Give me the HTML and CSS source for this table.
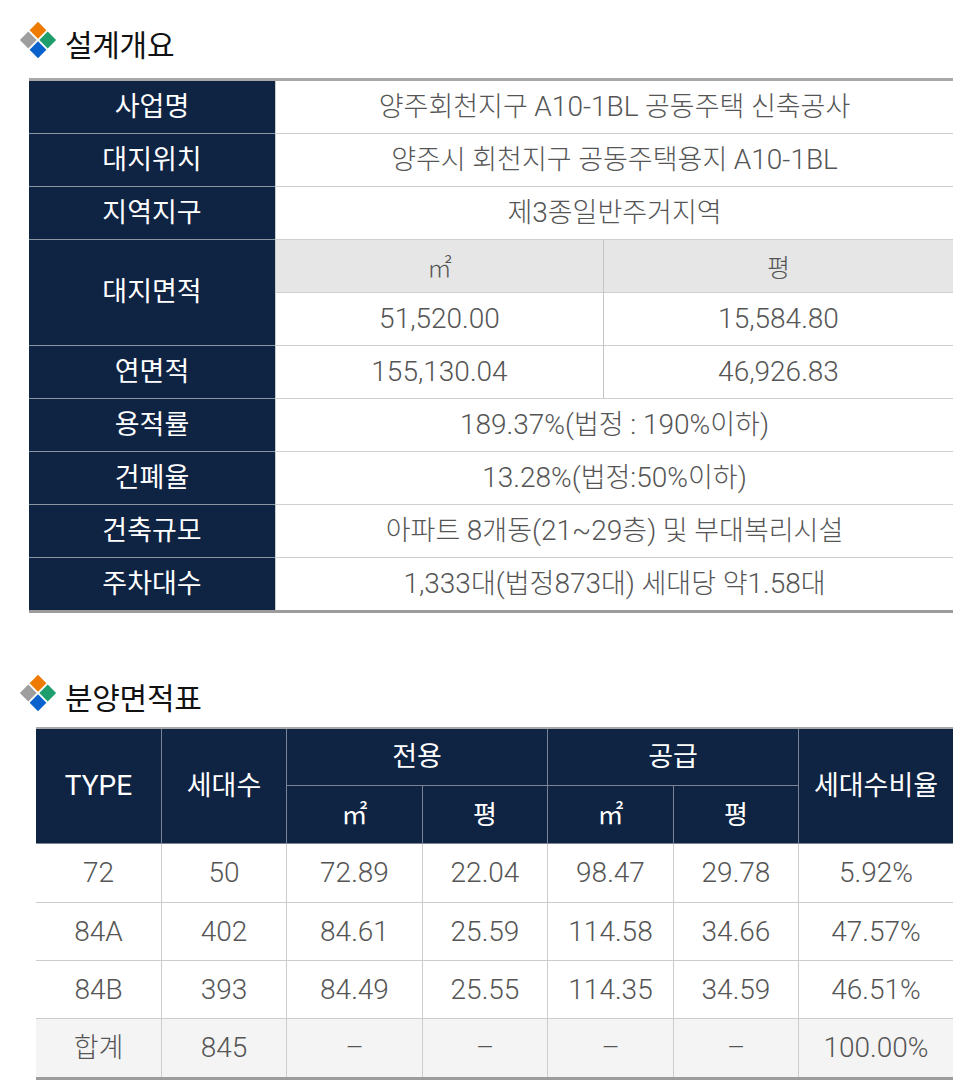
FILE: index.html
```html
<!DOCTYPE html>
<html lang="ko">
<head>
<meta charset="utf-8">
<title>설계개요 · 분양면적표</title>
<link rel="stylesheet" href="styles.css">
</head>
<body>
<div class="page">
  <h2 class="title">
    <svg class="ico" viewBox="0 0 40 40" aria-hidden="true">
      <g transform="rotate(45 20 20)">
        <rect x="6.5" y="6.5" width="12.5" height="12.5" fill="#ef7a00"/>
        <rect x="21" y="6.5" width="12.5" height="12.5" fill="#1d9e6c"/>
        <rect x="21" y="21" width="12.5" height="12.5" fill="#0a62cc"/>
        <rect x="6.5" y="21" width="12.5" height="12.5" fill="#9e9e9e"/>
      </g>
    </svg>
    <span class="title-text">설계개요</span>
  </h2>

  <table class="spec">
    <colgroup>
      <col class="c-h"><col class="c-a"><col class="c-b">
    </colgroup>
    <tbody>
      <tr><th>사업명</th><td colspan="2">양주회천지구 <span class="n">A10-1BL</span> 공동주택 신축공사</td></tr>
      <tr><th>대지위치</th><td colspan="2">양주시 회천지구 공동주택용지 <span class="n">A10-1BL</span></td></tr>
      <tr><th>지역지구</th><td colspan="2">제<span class="n">3</span>종일반주거지역</td></tr>
      <tr><th rowspan="2" class="tall">대지면적</th><td class="sub">㎡</td><td class="sub sep">평</td></tr>
      <tr><td class="n">51,520.00</td><td class="n sep">15,584.80</td></tr>
      <tr><th>연면적</th><td class="n">155,130.04</td><td class="n sep">46,926.83</td></tr>
      <tr><th>용적률</th><td colspan="2"><span class="n">189.37%(</span>법정 <span class="n">: 190%</span>이하<span class="n">)</span></td></tr>
      <tr><th>건폐율</th><td colspan="2"><span class="n">13.28%(</span>법정<span class="n">:50%</span>이하<span class="n">)</span></td></tr>
      <tr><th>건축규모</th><td colspan="2">아파트 <span class="n">8</span>개동<span class="n">(21~29</span>층<span class="n">)</span> 및 부대복리시설</td></tr>
      <tr class="last"><th>주차대수</th><td colspan="2"><span class="n">1,333</span>대<span class="n">(</span>법정<span class="n">873</span>대<span class="n">)</span> 세대당 약<span class="n">1.58</span>대</td></tr>
    </tbody>
  </table>

  <h2 class="title title2">
    <svg class="ico" viewBox="0 0 40 40" aria-hidden="true">
      <g transform="rotate(45 20 20)">
        <rect x="6.5" y="6.5" width="12.5" height="12.5" fill="#ef7a00"/>
        <rect x="21" y="6.5" width="12.5" height="12.5" fill="#1d9e6c"/>
        <rect x="21" y="21" width="12.5" height="12.5" fill="#0a62cc"/>
        <rect x="6.5" y="21" width="12.5" height="12.5" fill="#9e9e9e"/>
      </g>
    </svg>
    <span class="title-text">분양면적표</span>
  </h2>

  <table class="area">
    <colgroup>
      <col class="w126"><col class="w125"><col class="w136"><col class="w125"><col class="w126"><col class="w125"><col class="w154">
    </colgroup>
    <thead>
      <tr class="h1">
        <th rowspan="2" class="en">TYPE</th>
        <th rowspan="2">세대수</th>
        <th colspan="2">전용</th>
        <th colspan="2">공급</th>
        <th rowspan="2" class="end">세대수비율</th>
      </tr>
      <tr class="h2">
        <th>㎡</th><th>평</th><th>㎡</th><th>평</th>
      </tr>
    </thead>
    <tbody>
      <tr class="r1"><td>72</td><td>50</td><td>72.89</td><td>22.04</td><td>98.47</td><td>29.78</td><td class="end">5.92%</td></tr>
      <tr><td>84A</td><td>402</td><td>84.61</td><td>25.59</td><td>114.58</td><td>34.66</td><td class="end">47.57%</td></tr>
      <tr><td>84B</td><td>393</td><td>84.49</td><td>25.55</td><td>114.35</td><td>34.59</td><td class="end">46.51%</td></tr>
      <tr class="total"><td class="ko">합계</td><td>845</td><td>–</td><td>–</td><td>–</td><td>–</td><td class="end">100.00%</td></tr>
    </tbody>
  </table>
</div>
</body>
</html>
```

FILE: styles.css
```css
* { box-sizing: border-box; }

body {
  margin: 0;
  background: #ffffff;
  font-family: Roboto, "Noto Sans CJK KR", sans-serif;
  color: #555555;
}

.page {
  width: 960px;
  padding-top: 21px;
}

.title {
  display: flex;
  align-items: center;
  gap: 8px;
  height: 38px;
  margin: 0 0 0 19px;
  font-family: "Noto Sans CJK KR", sans-serif;
  font-size: 30px;
  font-weight: 400;
  color: #111111;
  letter-spacing: -0.3px;
}

.title-text {
  padding-top: 6px;
  line-height: 1;
}

.title2 { margin-top: 61px; }

.ico {
  width: 38px;
  height: 38px;
  flex: none;
}

/* ---------- 설계개요 ---------- */
.spec {
  margin: 19px 0 0 29px;
  width: 924px;
  table-layout: fixed;
  border-collapse: separate;
  border-spacing: 0;
  border-top: 3px solid #a8a8a8;
  border-bottom: 3px solid #9c9c9c;
}

.c-h { width: 246px; }
.c-a { width: 328px; }
.c-b { width: 350px; }

.spec th,
.spec td {
  height: 53px;
  padding: 0;
  text-align: center;
  vertical-align: middle;
  font-size: 27px;
  font-weight: 400;
  line-height: 1;
}

.spec th {
  background: #0f2343;
  color: #ffffff;
  border-bottom: 1px solid #8c95a2;
}

.spec td {
  color: #555555;
  font-weight: 300;
  border-left: 1px solid #cbcbcb;
  border-bottom: 1px solid #cfcfcf;
}

.spec td.sep { border-left: 1px solid #c4c4c4; }

.spec td.sub {
  background: #e6e6e6;
  color: #555555;
  font-family: "Noto Sans CJK KR", sans-serif;
  font-size: 25px;
}

.spec tr.last th,
.spec tr.last td {
  height: 52px;
  border-bottom: 0;
}

.n { font-size: 28px; }
.spec td.n { font-size: 28px; }

/* ---------- 분양면적표 ---------- */
.area {
  margin: 15px 0 0 36px;
  width: 917px;
  table-layout: fixed;
  border-collapse: separate;
  border-spacing: 0;
  border-top: 2px solid #a8a8a8;
  border-bottom: 3px solid #9c9c9c;
}

.w126 { width: 126px; }
.w125 { width: 125px; }
.w136 { width: 136px; }
.w154 { width: 154px; }

.area th,
.area td {
  padding: 0;
  text-align: center;
  vertical-align: middle;
  font-weight: 400;
  line-height: 1;
}

.area th {
  background: #0f2343;
  color: #ffffff;
  font-size: 27px;
  border-right: 1px solid #7b8494;
  border-bottom: 1px solid #7b8494;
}

.area th.en { font-size: 28px; }
.area th.end,
.area td.end { border-right: 0; }

.area tr.h1 th { height: 57px; }
.area tr.h2 th { height: 58px; }
.area tr.h2 th { font-size: 26px; }

.area td {
  height: 58px;
  font-size: 28px;
  font-weight: 300;
  color: #555555;
  border-right: 1px solid #cccccc;
  border-bottom: 1px solid #cccccc;
}

.area tr.r1 td { height: 59px; }

.area td.ko { font-size: 27px; }

.area tr.total td {
  background: #f4f4f4;
  border-bottom: 0;
}
```
